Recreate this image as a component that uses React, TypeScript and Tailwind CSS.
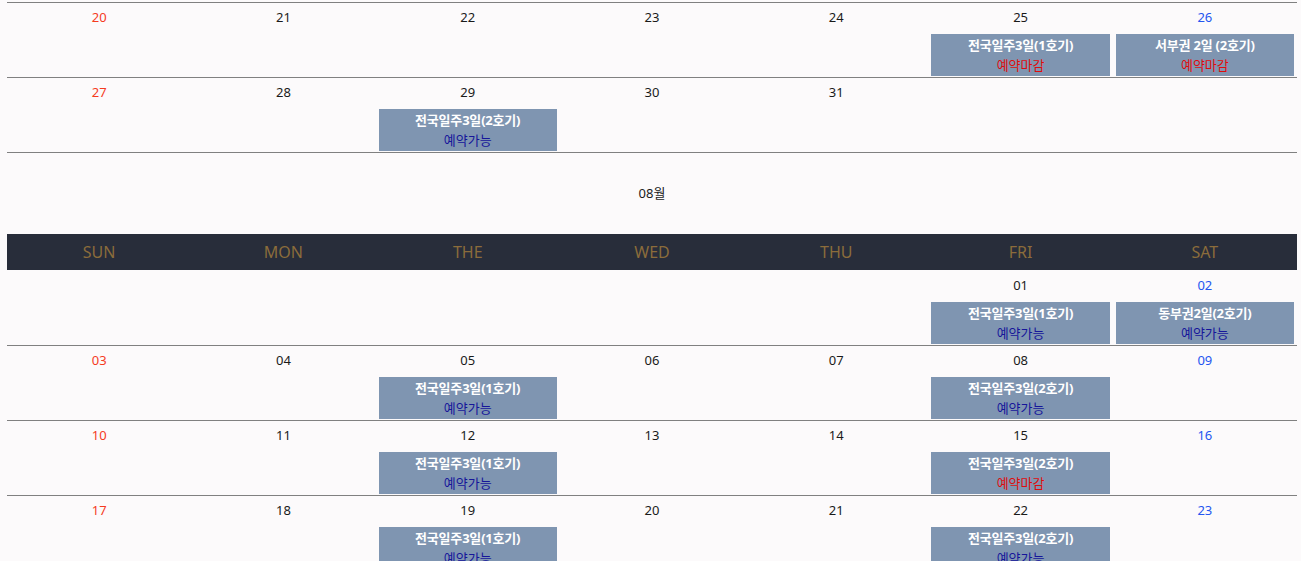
import React from "react";

type Ev = { title: string; open: boolean };
type Cell = { d: string; ev?: Ev } | null;

const FONT = { fontFamily: '"Noto Sans", "Noto Sans CJK KR", sans-serif' };

const july: Cell[][] = [
  [
    { d: "20" },
    { d: "21" },
    { d: "22" },
    { d: "23" },
    { d: "24" },
    { d: "25", ev: { title: "전국일주3일(1호기)", open: false } },
    { d: "26", ev: { title: "서부권 2일 (2호기)", open: false } },
  ],
  [
    { d: "27" },
    { d: "28" },
    { d: "29", ev: { title: "전국일주3일(2호기)", open: true } },
    { d: "30" },
    { d: "31" },
    null,
    null,
  ],
];

const aug: Cell[][] = [
  [
    null,
    null,
    null,
    null,
    null,
    { d: "01", ev: { title: "전국일주3일(1호기)", open: true } },
    { d: "02", ev: { title: "동부권2일(2호기)", open: true } },
  ],
  [
    { d: "03" },
    { d: "04" },
    { d: "05", ev: { title: "전국일주3일(1호기)", open: true } },
    { d: "06" },
    { d: "07" },
    { d: "08", ev: { title: "전국일주3일(2호기)", open: true } },
    { d: "09" },
  ],
  [
    { d: "10" },
    { d: "11" },
    { d: "12", ev: { title: "전국일주3일(1호기)", open: true } },
    { d: "13" },
    { d: "14" },
    { d: "15", ev: { title: "전국일주3일(2호기)", open: false } },
    { d: "16" },
  ],
  [
    { d: "17" },
    { d: "18" },
    { d: "19", ev: { title: "전국일주3일(1호기)", open: true } },
    { d: "20" },
    { d: "21" },
    { d: "22", ev: { title: "전국일주3일(2호기)", open: true } },
    { d: "23" },
  ],
];

const days = ["SUN", "MON", "THE", "WED", "THU", "FRI", "SAT"];

function DayCell({ cell, col }: { cell: Cell; col: number }) {
  const color =
    col === 0 ? "text-[#f53b1f]" : col === 6 ? "text-[#2456f0]" : "text-[#1a1a1a]";
  return (
    <div className="flex flex-col items-stretch px-[3px]">
      {cell && (
        <>
          <div className={`pt-[4px] text-center text-[13px] leading-[20px] ${color}`}>
            {cell.d}
          </div>
          {cell.ev && (
            <div className="mt-[7px] h-[42px] bg-[#7f95b1] pt-px text-center">
              <div className="text-[13px] font-bold leading-[20px] tracking-[-0.2px] text-white">
                {cell.ev.title}
              </div>
              <div
                className={`text-[13px] leading-[20px] ${
                  cell.ev.open ? "text-[#16169a]" : "text-[#e00c0c]"
                }`}
              >
                {cell.ev.open ? "예약가능" : "예약마감"}
              </div>
            </div>
          )}
        </>
      )}
    </div>
  );
}

function Week({ row }: { row: Cell[] }) {
  return (
    <div className="grid h-[75px] grid-cols-7 border-b border-[#808080]">
      {row.map((c, i) => (
        <DayCell key={i} cell={c} col={i} />
      ))}
    </div>
  );
}

export default function App() {
  return (
    <div className="min-h-[561px] bg-[#fcfafb] pl-[7px] pr-[4px] pt-[2px]" style={FONT}>
      <div className="border-t border-[#808080]">
        {july.map((r, i) => (
          <Week key={i} row={r} />
        ))}
      </div>
      <div className="flex h-[81px] items-center justify-center text-[13px] text-[#1a1a1a]">
        08월
      </div>
      <div className="grid h-[36px] grid-cols-7 items-center bg-[#282d3a]">
        {days.map((d) => (
          <div key={d} className="text-center text-[16px] text-[#8b6c3b]">
            {d}
          </div>
        ))}
      </div>
      <div className="pt-px">
        {aug.map((r, i) => (
          <Week key={i} row={r} />
        ))}
      </div>
    </div>
  );
}
